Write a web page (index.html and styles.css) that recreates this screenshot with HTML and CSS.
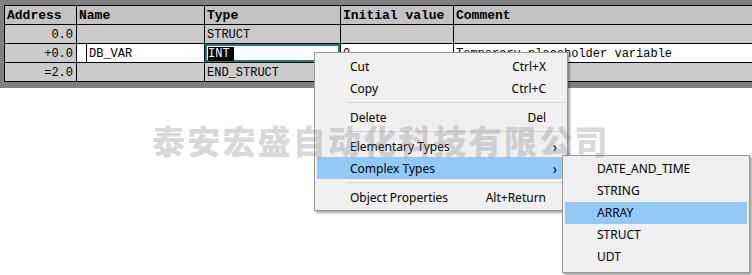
FILE: index.html
```html
<!DOCTYPE html>
<html lang="en">
<head>
  <meta charset="UTF-8" />
  <meta name="viewport" content="width=device-width, initial-scale=1.0" />
  <title>DB Declaration</title>
  <link rel="stylesheet" href="styles.css">
</head>
<body>
  <div class="editor">
    <table class="decl">
      <colgroup>
        <col class="c-addr">
        <col class="c-name">
        <col class="c-type">
        <col class="c-init">
        <col>
      </colgroup>
      <thead>
        <tr>
          <th>Address</th>
          <th>Name</th>
          <th>Type</th>
          <th>Initial value</th>
          <th>Comment</th>
        </tr>
      </thead>
      <tbody>
        <tr class="row-gray">
          <td class="addr">0.0</td>
          <td></td>
          <td>STRUCT</td>
          <td></td>
          <td></td>
        </tr>
        <tr class="row-white">
          <td class="addr">+0.0</td>
          <td class="name"><span class="name-cell">DB_VAR</span></td>
          <td class="editing"><span class="sel">INT</span></td>
          <td>0</td>
          <td>Temporary placeholder variable</td>
        </tr>
        <tr class="row-gray">
          <td class="addr">=2.0</td>
          <td></td>
          <td>END_STRUCT</td>
          <td></td>
          <td></td>
        </tr>
      </tbody>
    </table>
  </div>

  <div class="menu">
    <div class="item"><span>Cut</span><span class="key">Ctrl+X</span></div>
    <div class="item"><span>Copy</span><span class="key">Ctrl+C</span></div>
    <div class="sep"></div>
    <div class="item"><span>Delete</span><span class="key">Del</span></div>
    <div class="sep"></div>
    <div class="item"><span>Elementary Types</span><span class="arrow">&#8250;</span></div>
    <div class="item active"><span>Complex Types</span><span class="arrow">&#8250;</span></div>
    <div class="sep"></div>
    <div class="item"><span>Object Properties</span><span class="key">Alt+Return</span></div>
  </div>

  <div class="submenu">
    <div class="item">DATE_AND_TIME</div>
    <div class="item">STRING</div>
    <div class="item active">ARRAY</div>
    <div class="item">STRUCT</div>
    <div class="item">UDT</div>
  </div>

  <div class="watermark">泰安宏盛自动化科技有限公司</div>
</body>
</html>
```

FILE: styles.css
```css
body {
  margin: 0;
  background: #fff;
  font-family: "Liberation Mono", monospace;
  width: 752px;
  height: 275px;
  overflow: hidden;
  position: relative;
}
.editor {
  background: #808080;
  padding: 5px 0 6px 4px;
  overflow: hidden;
}
.decl {
  border-collapse: collapse;
  table-layout: fixed;
  width: 760px;
  font-size: 12px;
  color: #000;
}
.c-addr { width: 72px; }
.c-name { width: 128px; }
.c-type { width: 136px; }
.c-init { width: 113px; }
.decl th,
.decl td {
  border: 1px solid #000;
  height: 18px;
  padding: 0 2px;
  text-align: left;
  white-space: nowrap;
  overflow: hidden;
  line-height: 17px;
}
.decl td {
  height: 16px;
  padding-top: 2px;
  line-height: 16px;
  vertical-align: top;
}
.decl th {
  background: #c3c3c3;
  font-size: 13px;
  font-weight: bold;
}
.row-gray td {
  background: #cbcbcb;
}
.row-white td {
  background: #fff;
}
.decl td.addr {
  background: #cbcbcb;
  text-align: right;
  padding-right: 3px;
}
.decl td.name {
  padding: 0 0 0 9px;
}
.name-cell {
  display: block;
  height: 16px;
  padding: 2px 0 0 2px;
  border-left: 1px solid #000;
}
.decl td.editing {
  box-shadow: inset 0 0 0 2px #1f7f80;
  padding-left: 3px;
}
.sel {
  background: #000;
  color: #fff;
  padding-right: 4px;
}

.menu,
.submenu {
  position: absolute;
  background: #f0f0f0;
  border: 1px solid #979797;
  box-shadow: 2px 2px 2px rgba(0, 0, 0, 0.35);
  font-family: "Noto Sans", sans-serif;
  font-size: 12px;
  color: #000;
}
.menu {
  left: 314px;
  top: 52px;
  width: 248px;
  padding: 2px 2px 2px;
}
.menu .item {
  display: flex;
  justify-content: space-between;
  align-items: center;
  height: 22px;
  padding: 0 5px 0 33px;
}
.menu .key {
  padding-right: 14px;
}
.menu .arrow {
  font-size: 14px;
  padding-right: 3px;
}
.menu .active,
.submenu .active {
  background: #91c9f7;
}
.sep {
  height: 1px;
  background: #d7d7d7;
  margin: 3px 0 3px 29px;
}
.submenu {
  left: 562px;
  top: 155px;
  width: 182px;
  padding: 2px 2px 4px;
}
.submenu .item {
  height: 22px;
  line-height: 22px;
  padding-left: 32px;
}

.watermark {
  position: absolute;
  left: 152px;
  top: 116px;
  font-family: "Noto Sans CJK SC", sans-serif;
  font-weight: 900;
  font-size: 33px;
  letter-spacing: 2.2px;
  color: rgba(120, 120, 120, 0.3);
  white-space: nowrap;
  pointer-events: none;
}
```
